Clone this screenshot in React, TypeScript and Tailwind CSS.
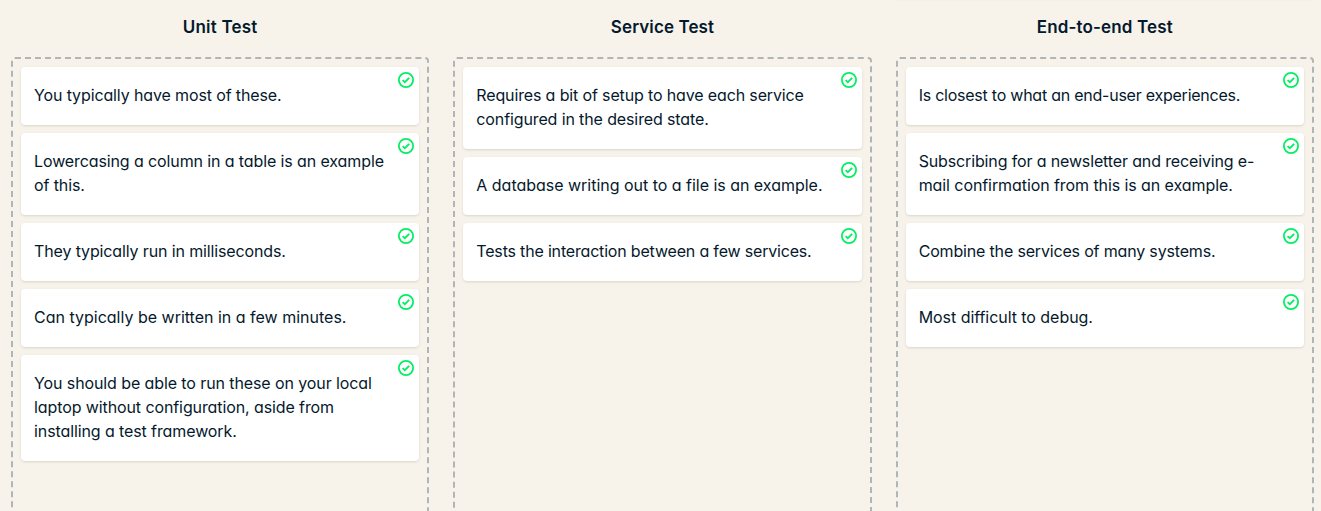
type Line = { text: string; tracking: string };

const columns: { title: string; tracking: string; cards: Line[][] }[] = [
  { title: "Unit Test", tracking: "tracking-[0.2px]", cards: [
    [{ text: "You typically have most of these.", tracking: "tracking-[-0.125px]" }],
    [
      { text: "Lowercasing a column in a table is an example", tracking: "tracking-[-0.11px]" },
      { text: "of this.", tracking: "tracking-[-0.1px]" },
    ],
    [{ text: "They typically run in milliseconds.", tracking: "tracking-[-0.13px]" }],
    [{ text: "Can typically be written in a few minutes.", tracking: "tracking-normal" }],
    [
      { text: "You should be able to run these on your local", tracking: "tracking-[-0.1px]" },
      { text: "laptop without configuration, aside from", tracking: "tracking-[-0.1px]" },
      { text: "installing a test framework.", tracking: "tracking-[-0.1px]" },
    ],
  ] },
  { title: "Service Test", tracking: "tracking-[0.1px]", cards: [
    [
      { text: "Requires a bit of setup to have each service", tracking: "tracking-[-0.14px]" },
      { text: "configured in the desired state.", tracking: "tracking-[-0.12px]" },
    ],
    [{ text: "A database writing out to a file is an example.", tracking: "tracking-[-0.02px]" }],
    [{ text: "Tests the interaction between a few services.", tracking: "tracking-[-0.18px]" }],
  ] },
  { title: "End-to-end Test", tracking: "tracking-[0.15px]", cards: [
    [{ text: "Is closest to what an end-user experiences.", tracking: "tracking-[-0.24px]" }],
    [
      { text: "Subscribing for a newsletter and receiving e-", tracking: "tracking-[-0.14px]" },
      { text: "mail confirmation from this is an example.", tracking: "tracking-[-0.08px]" },
    ],
    [{ text: "Combine the services of many systems.", tracking: "tracking-[-0.17px]" }],
    [{ text: "Most difficult to debug.", tracking: "tracking-[-0.05px]" }],
  ] },
];

function CheckIcon() {
  return (
    <svg className="absolute top-[5px] right-[5px]" width="16" height="16" viewBox="0 0 16 16" fill="none" stroke="#03ef62" strokeWidth="1.8">
      <circle cx="8" cy="8" r="7.1" />
      <path d="m4.6 8.2 2.2 2 4.4-4.4" />
    </svg>
  );
}

export default function App() {
  return (
    <main className="flex h-[511px] gap-6 overflow-hidden bg-[#f7f3eb] pl-[11px] pr-[7px] font-['Inter',sans-serif] text-[#05192d] [font-feature-settings:'cv11'_1]">
      {columns.map((c) => (
        <section key={c.title} className="flex flex-1 flex-col last:bg-[linear-gradient(#f3efe8,#f7f3eb_2px)]">
          <h2 className={`pt-[15px] text-center text-[17px] leading-6 font-semibold ${c.tracking}`}>{c.title}</h2>
          <div className="mt-[18px] h-[600px] shrink-0 rounded border-2 border-dashed border-[#b0b5b5] p-2">
            {c.cards.map((lines) => (
              <div key={lines[0].text} className="relative mb-2 rounded bg-white px-[13px] pt-4 pb-[18px] text-base leading-6 shadow">
                {lines.map((l) => (
                  <p key={l.text} className={`whitespace-nowrap ${l.tracking}`}>{l.text}</p>
                ))}
                <CheckIcon />
              </div>
            ))}
          </div>
        </section>
      ))}
    </main>
  );
}
